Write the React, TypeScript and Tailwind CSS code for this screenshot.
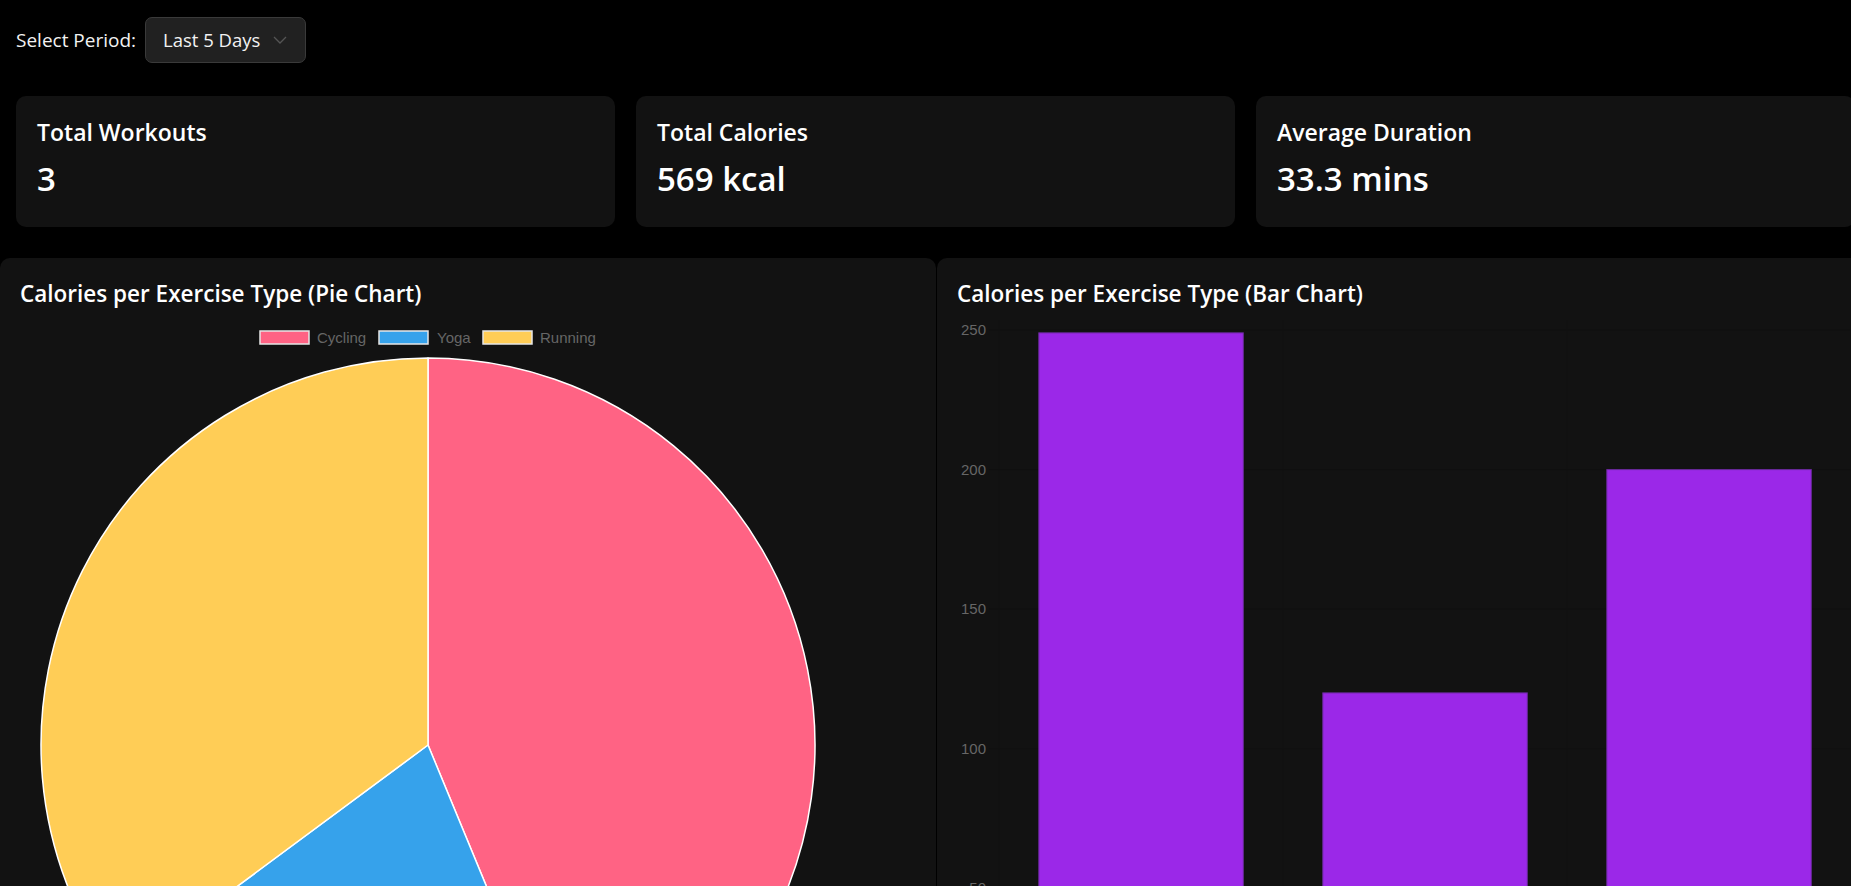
import React from 'react';

const stats = [
  { label: 'Total Workouts', value: '3' },
  { label: 'Total Calories', value: '569 kcal' },
  { label: 'Average Duration', value: '33.3 mins' },
];

const data = [
  { name: 'Cycling', kcal: 249, color: '#ff6384' },
  { name: 'Yoga', kcal: 120, color: '#36a2eb' },
  { name: 'Running', kcal: 200, color: '#ffcd56' },
];

const total = data.reduce((s, d) => s + d.kcal, 0);

const PieChart = () => {
  const cx = 408;
  const cy = 425;
  const r = 387;
  let acc = 0;
  const pt = (a: number) => [cx + r * Math.sin(a), cy - r * Math.cos(a)];
  const legend = [
    { x: 239, tx: 297 },
    { x: 358, tx: 417 },
    { x: 462, tx: 520 },
  ];
  return (
    <svg width="896" height="620" className="block" style={{ fontFamily: '"Liberation Sans", Arial, sans-serif' }}>
      {data.map((d, i) => (
        <g key={d.name}>
          <rect x={legend[i].x + 1} y={11} width={49} height={13} fill={d.color} stroke="#e6e6e6" strokeWidth="1.5" />
          <text x={legend[i].tx} y={22.5} fontSize="15" fill="#666">{d.name}</text>
        </g>
      ))}
      {data.map((d) => {
        const a0 = (acc / total) * Math.PI * 2;
        acc += d.kcal;
        const a1 = (acc / total) * Math.PI * 2;
        const [x0, y0] = pt(a0);
        const [x1, y1] = pt(a1);
        const large = a1 - a0 > Math.PI ? 1 : 0;
        return (
          <path
            key={d.name}
            d={`M${cx},${cy} L${x0},${y0} A${r},${r} 0 ${large} 1 ${x1},${y1} Z`}
            fill={d.color}
            stroke="#fff"
            strokeWidth="1.5"
            strokeLinejoin="round"
          />
        );
      })}
    </svg>
  );
};

const BarChart = () => {
  const y0 = 707.8;
  const k = 2.791;
  const left = 42;
  const cw = 284;
  const ticks = [250, 200, 150, 100, 50];
  return (
    <svg width="914" height="620" className="block" style={{ fontFamily: '"Liberation Sans", Arial, sans-serif' }}>
      {ticks.map((t) => (
        <g key={t}>
          <line x1={32} x2={left + cw * 3} y1={y0 - t * k} y2={y0 - t * k} stroke="#101010" strokeWidth="1" />
          <text x={29} y={y0 - t * k + 5} fontSize="15" fill="#666" textAnchor="end">{t}</text>
        </g>
      ))}
      {[0, 1, 2, 3].map((i) => (
        <line key={i} x1={left + cw * i} x2={left + cw * i} y1={0} y2={720} stroke="#101010" strokeWidth="1" />
      ))}
      {data.map((d, i) => (
        <rect
          key={d.name}
          x={left + cw * i + 39.8}
          y={y0 - d.kcal * k}
          width={204.5}
          height={d.kcal * k}
          fill="#9b28e8"
          stroke="#6a2a9c"
          strokeWidth="1"
        />
      ))}
    </svg>
  );
};

export default function App() {
  return (
    <div
      className="w-[1851px] h-[886px] overflow-hidden bg-black text-white"
      style={{ fontFamily: '"Open Sans", "Noto Sans", sans-serif' }}
    >
      <div className="flex items-center h-[46px] mt-[17px] pl-[16px] gap-[9px]">
        <span className="text-[19px] text-[#f2f2f2]">Select Period:</span>
        <div className="flex items-center w-[161px] h-[46px] pl-[17px] pr-[18px] justify-between rounded-[7px] border border-[#3a3a3a] bg-[#212121]">
          <span className="text-[18.5px] text-[#f2f2f2]">Last 5 Days</span>
          <svg width="14" height="8" viewBox="0 0 14 8" fill="none">
            <path d="M1 1l6 6 6-6" stroke="#555" strokeWidth="1.3" />
          </svg>
        </div>
      </div>

      <div className="flex gap-[21px] mt-[33px] pl-[16px]">
        {stats.map((s) => (
          <div key={s.label} className="w-[599px] h-[131px] shrink-0 rounded-[10px] bg-[#121212] pl-[21px] pt-[22px]">
            <div className="text-[23px] leading-[28px] font-semibold">{s.label}</div>
            <div className="mt-[13px] text-[33px] leading-[40px] font-semibold">{s.value}</div>
          </div>
        ))}
      </div>

      <div className="flex gap-[1px] mt-[31px]">
        <div className="w-[936px] h-[700px] shrink-0 rounded-[10px] bg-[#121212] px-[20px] pt-[22px]">
          <div className="text-[22.5px] leading-[28px] font-semibold">Calories per Exercise Type (Pie Chart)</div>
          <div className="mt-[12px]">
            <PieChart />
          </div>
        </div>
        <div className="w-[935px] h-[700px] shrink-0 rounded-[10px] bg-[#121212] px-[20px] pt-[22px]">
          <div className="text-[22.5px] leading-[28px] font-semibold">Calories per Exercise Type (Bar Chart)</div>
          <div className="mt-[12px]">
            <BarChart />
          </div>
        </div>
      </div>
    </div>
  );
}
